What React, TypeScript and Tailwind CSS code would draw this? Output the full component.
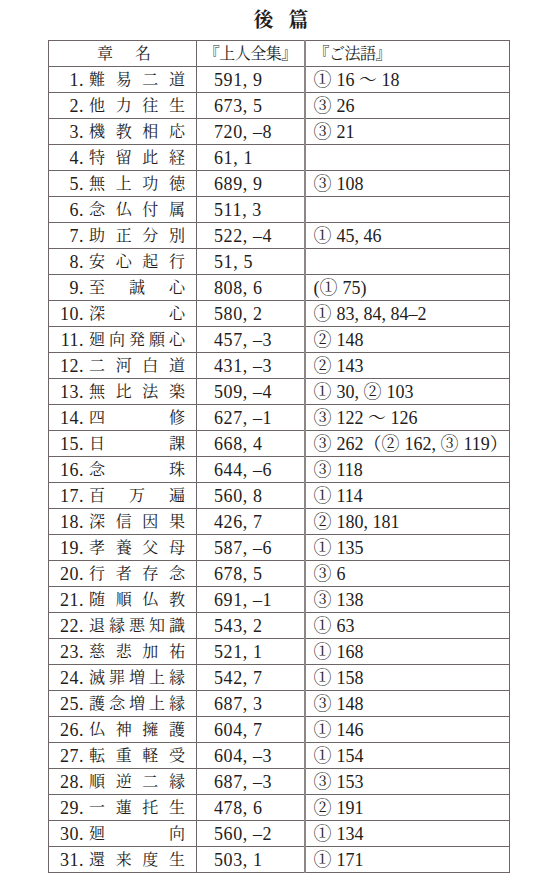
import React from "react";

type Row = [number, string, string, string];

const rows: Row[] = [
  [1, "難易二道", "591, 9", "①|16 ～ 18"],
  [2, "他力往生", "673, 5", "③|26"],
  [3, "機教相応", "720, –8", "③|21"],
  [4, "特留此経", "61, 1", ""],
  [5, "無上功徳", "689, 9", "③|108"],
  [6, "念仏付属", "511, 3", ""],
  [7, "助正分別", "522, –4", "①|45, 46"],
  [8, "安心起行", "51, 5", ""],
  [9, "至誠心", "808, 6", "(①|75)"],
  [10, "深心", "580, 2", "①|83, 84, 84–2"],
  [11, "廻向発願心", "457, –3", "②|148"],
  [12, "二河白道", "431, –3", "②|143"],
  [13, "無比法楽", "509, –4", "①|30, ②|103"],
  [14, "四修", "627, –1", "③|122 ～ 126"],
  [15, "日課", "668, 4", "③|262（②|162, ③|119）"],
  [16, "念珠", "644, –6", "③|118"],
  [17, "百万遍", "560, 8", "①|114"],
  [18, "深信因果", "426, 7", "②|180, 181"],
  [19, "孝養父母", "587, –6", "①|135"],
  [20, "行者存念", "678, 5", "③|6"],
  [21, "随順仏教", "691, –1", "③|138"],
  [22, "退縁悪知識", "543, 2", "①|63"],
  [23, "慈悲加祐", "521, 1", "①|168"],
  [24, "滅罪増上縁", "542, 7", "①|158"],
  [25, "護念増上縁", "687, 3", "③|148"],
  [26, "仏神擁護", "604, 7", "①|146"],
  [27, "転重軽受", "604, –3", "①|154"],
  [28, "順逆二縁", "687, –3", "③|153"],
  [29, "一蓮托生", "478, 6", "②|191"],
  [30, "廻向", "560, –2", "①|134"],
  [31, "還来度生", "503, 1", "①|171"],
];

function Ref({ text }: { text: string }) {
  // "|" marks the small gap after a circled number
  const parts = text.split("|");
  return (
    <span className="whitespace-nowrap">
      {parts.map((p, i) => (
        <React.Fragment key={i}>
          {i > 0 && <span className="inline-block w-[5px]" />}
          {p}
        </React.Fragment>
      ))}
    </span>
  );
}

export default function App() {
  return (
    <div className="w-[560px] h-[890px] bg-white text-[#231c1c] font-['Liberation_Serif','Noto_Serif_CJK_JP','Noto_Sans_CJK_JP',serif]">
      <div className="h-10 flex items-center justify-center gap-[15px] text-[20px] font-bold leading-none pl-[2px]">
        <span>後</span>
        <span>篇</span>
      </div>
      <table className="ml-[48px] w-[461px] table-fixed border-collapse border border-[#5a5252]">
        <colgroup>
          <col className="w-[148px]" />
          <col className="w-[108px]" />
          <col className="w-[205px]" />
        </colgroup>
        <thead>
          <tr className="h-[26px] text-[16px] leading-none">
            <th className="border border-[#6e6666] p-0 font-normal">
              <div className="flex justify-center gap-[22px] pl-[3px]">
                <span>章</span>
                <span>名</span>
              </div>
            </th>
            <th className="border border-[#6e6666] p-0 font-normal text-center tracking-[-0.5px]">
              『上人全集』
            </th>
            <th className="border border-[#6e6666] border-l-2 border-l-[#8c8686] p-0 pl-[8px] font-normal text-left tracking-[-0.5px]">
              『ご法語』
            </th>
          </tr>
        </thead>
        <tbody>
          {rows.map(([n, name, page, ref]) => (
            <tr key={n} className="h-[26px] leading-none">
              <td className="border border-[#6e6666] p-0">
                <div className="flex items-center">
                  <span className="w-[35px] text-right text-[18px] tracking-[0.5px]">{n}.</span>
                  <span className="ml-[5px] w-[96px] flex justify-between text-[16px]">
                    {Array.from(name).map((c, i) => (
                      <span key={i}>{c}</span>
                    ))}
                  </span>
                </div>
              </td>
              <td className="border border-[#6e6666] p-0 pl-[17px] text-[18px] tracking-[0.6px] whitespace-nowrap">
                {page}
              </td>
              <td className="border border-[#6e6666] border-l-2 border-l-[#8c8686] p-0 pl-[8px] text-[18px]">
                <Ref text={ref} />
              </td>
            </tr>
          ))}
        </tbody>
      </table>
    </div>
  );
}
